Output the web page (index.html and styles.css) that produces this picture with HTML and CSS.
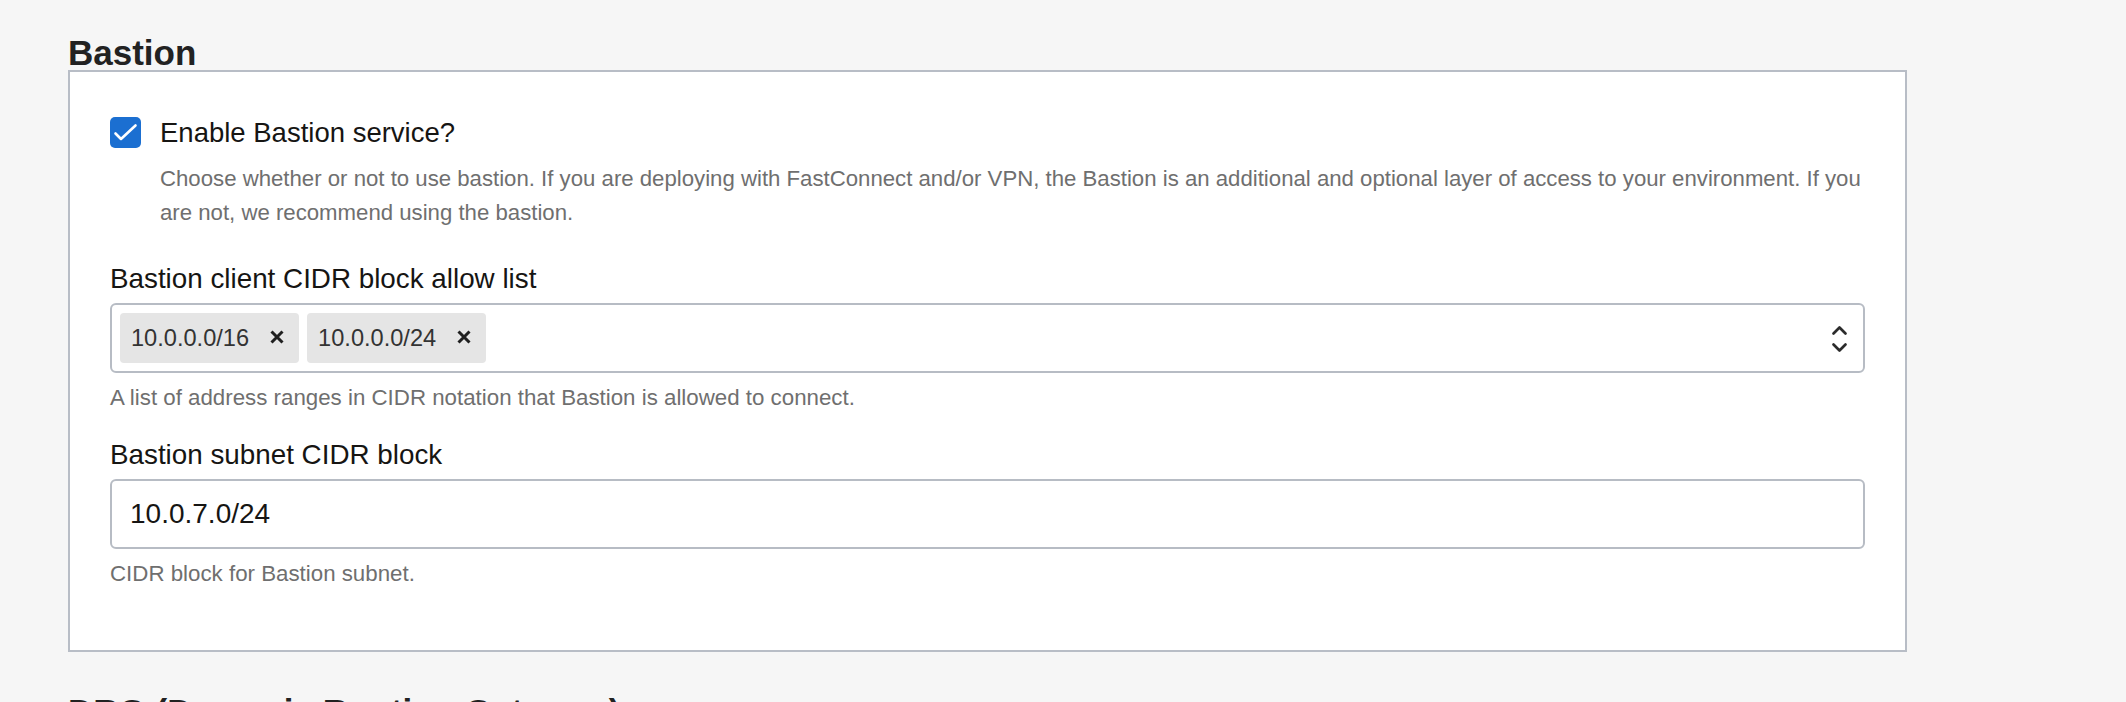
FILE: index.html
```html
<!DOCTYPE html>
<html lang="en">
<head>
<meta charset="utf-8">
<title>Bastion</title>
<link rel="stylesheet" href="styles.css">
</head>
<body>
<main class="page">
  <section class="section">
    <h2 class="section-title">Bastion</h2>
    <div class="panel">
      <div class="check-row">
        <span class="checkbox">
          <svg width="31" height="31" viewBox="0 0 31 31"><path d="M5.5 16.5 L11 22 L25.5 8.5" fill="none" stroke="#fff" stroke-width="2.6" stroke-linecap="round" stroke-linejoin="round"/></svg>
        </span>
        <div class="check-body">
          <div class="check-label">Enable Bastion service?</div>
          <p class="check-desc">Choose whether or not to use bastion. If you are deploying with FastConnect and/or VPN, the Bastion is an additional and optional layer of access to your environment. If you are not, we recommend using the bastion.</p>
        </div>
      </div>

      <div class="field field-first">
        <div class="field-label">Bastion client CIDR block allow list</div>
        <div class="select">
          <div class="tags">
            <span class="tag">10.0.0.0/16<svg class="tag-x" width="14" height="14" viewBox="0 0 14 14"><path d="M1.5 1.5 L12.5 12.5 M12.5 1.5 L1.5 12.5" stroke="#1f1f1f" stroke-width="3" stroke-linecap="butt"/></svg></span>
            <span class="tag">10.0.0.0/24<svg class="tag-x" width="14" height="14" viewBox="0 0 14 14"><path d="M1.5 1.5 L12.5 12.5 M12.5 1.5 L1.5 12.5" stroke="#1f1f1f" stroke-width="3" stroke-linecap="butt"/></svg></span>
          </div>
          <svg class="chevrons" width="17" height="34" viewBox="0 0 17 34"><path d="M2.5 11.5 L8.5 5.5 L14.5 11.5 M2.5 22.5 L8.5 28.5 L14.5 22.5" fill="none" stroke="#2b2b2b" stroke-width="2.7" stroke-linecap="round" stroke-linejoin="round"/></svg>
        </div>
        <p class="help">A list of address ranges in CIDR notation that Bastion is allowed to connect.</p>
      </div>

      <div class="field">
        <div class="field-label">Bastion subnet CIDR block</div>
        <div class="input">10.0.7.0/24</div>
        <p class="help">CIDR block for Bastion subnet.</p>
      </div>
    </div>
  </section>

  <section class="section">
    <h2 class="section-title">DRG (Dynamic Routing Gateway)</h2>
    <div class="panel panel-next"></div>
  </section>
</main>
</body>
</html>
```
FILE: styles.css
```css
* { box-sizing: border-box; }

html, body {
  margin: 0;
  padding: 0;
  background: #f6f6f6;
  font-family: "Liberation Sans", Arial, "Helvetica Neue", sans-serif;
  color: #161513;
}

.page {
  padding: 35px 0 0 68px;
  display: flex;
  flex-direction: column;
  gap: 42px;
}

.section {
  display: flex;
  flex-direction: column;
}

.section-title {
  margin: 0;
  font-size: 35px;
  line-height: 35px;
  font-weight: 700;
  color: #222;
}

.panel {
  width: 1839px;
  background: #fff;
  border: 2px solid #b8bdc6;
  padding: 45px 40px 62px 40px;
}

.panel-next {
  min-height: 300px;
}

.check-row {
  display: flex;
  align-items: flex-start;
  gap: 19px;
}

.checkbox {
  flex: 0 0 31px;
  width: 31px;
  height: 31px;
  border-radius: 5px;
  background: #1b6fd1;
  display: flex;
}

.check-body {
  flex: 1;
}

.check-label {
  font-size: 27.5px;
  line-height: 31px;
  color: #161513;
}

.check-desc {
  margin: 14px 0 0;
  font-size: 22.2px;
  line-height: 33.5px;
  color: #6f6f6f;
}

.field {
  margin-top: 26px;
}

.field-first {
  margin-top: 33px;
}

.field-label {
  font-size: 27.8px;
  line-height: 34px;
  color: #161513;
}

.select {
  margin-top: 7px;
  height: 70px;
  border: 2px solid #b7bcc4;
  border-radius: 6px;
  background: #fff;
  padding: 8px 15px 8px 8px;
  display: flex;
  align-items: center;
  justify-content: space-between;
}

.tags {
  display: flex;
  gap: 8px;
  height: 100%;
}

.tag {
  display: flex;
  align-items: center;
  height: 50px;
  padding: 0 15px 0 11px;
  gap: 21px;
  background: #e5e5e5;
  border-radius: 4px;
  font-size: 23.6px;
  color: #333;
}

.tag-x {
  display: block;
  margin-top: -3px;
}

.chevrons {
  display: block;
  margin-top: 2px;
}

.input {
  margin-top: 7px;
  height: 70px;
  border: 2px solid #b7bcc4;
  border-radius: 6px;
  background: #fff;
  padding: 0 18px;
  display: flex;
  align-items: center;
  font-size: 28px;
  color: #161513;
}

.help {
  margin: 11px 0 0;
  font-size: 22.3px;
  line-height: 28px;
  color: #6f6f6f;
}
```
